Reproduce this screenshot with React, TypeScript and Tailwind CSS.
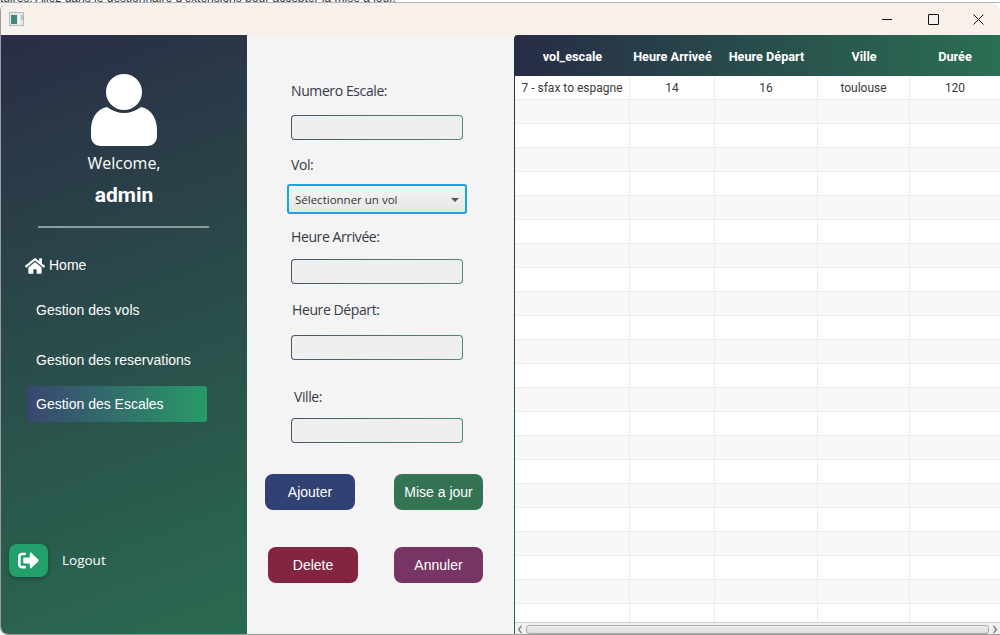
import React from "react";
import { FaHome, FaSignOutAlt } from "react-icons/fa";

const ui = "font-['Open_Sans',sans-serif]";
const arial = "font-['Liberation_Sans',Arial,sans-serif]";
const roboto = "font-['Roboto',sans-serif]";

const columns = [
  { name: "vol_escale", width: "w-[115px]", value: "7 - sfax to espagne" },
  { name: "Heure Arriveé", width: "w-[85px]", value: "14" },
  { name: "Heure Départ", width: "w-[103px]", value: "16" },
  { name: "Ville", width: "w-[92px]", value: "toulouse" },
  { name: "Durée", width: "w-[90px]", value: "120" },
];

const rows = Array.from({ length: 23 }, (_, i) => i);

function Avatar() {
  return (
    <svg width="66" height="72" viewBox="0 0 66 72" fill="white">
      <circle cx="33" cy="18" r="18" />
      <path d="M16 33 C22 37 27 39 33 39 C39 39 44 37 50 33 C60 35 66 44 66 56 L66 62 C66 68 62 72 56 72 L10 72 C4 72 0 68 0 62 L0 56 C0 44 6 35 16 33 Z" />
    </svg>
  );
}

function Field({ className }: { className: string }) {
  return (
    <div
      className={`h-[25px] w-[172px] rounded-[4px] bg-[linear-gradient(90deg,#46566a,#4f8a70)] p-px ${className}`}
    >
      <div className="h-full w-full rounded-[3px] bg-[#efefef]" />
    </div>
  );
}

function Label({ text, className }: { text: string; className: string }) {
  return (
    <div
      className={`${ui} h-5 text-[14px] leading-5 tracking-[-0.4px] text-[#333a45] ${className}`}
    >
      {text}
    </div>
  );
}

function ActionButton({
  text,
  className,
}: {
  text: string;
  className: string;
}) {
  return (
    <button
      className={`${arial} h-9 rounded-lg text-[14px] text-white ${className}`}
    >
      {text}
    </button>
  );
}

export default function App() {
  return (
    <div className="h-[635px] w-[1000px] overflow-hidden bg-white">
      {/* page behind the window */}
      <div className="h-[3px] overflow-hidden border-b border-[#b5b5b5] bg-white">
        <div
          className={`${arial} -mt-[10px] whitespace-nowrap text-[12px] leading-4 text-[#333]`}
        >
          tuires. Allez dans le gestionnaire d'extensions pour accepter la mise à jour.
        </div>
      </div>

      <div className="h-[632px] overflow-hidden rounded-t-lg rounded-bl-lg border-b border-l border-[#9c9c9c]">
        {/* title bar */}
        <div className="flex h-[32px] items-center justify-between bg-[#f8f0eb] pl-[8px]">
          <svg width="15" height="14" viewBox="0 0 15 14">
            <rect x="0.5" y="0.5" width="14" height="13" fill="#e4e8ea" stroke="#b8bcc0" />
            <rect x="2" y="3" width="6" height="9" fill="#3f8a74" />
            <rect x="9" y="3" width="2" height="9" fill="#f6f6f6" />
            <rect x="12" y="3" width="2" height="5" fill="#a9cfc2" />
          </svg>
          <div className="flex h-full items-center">
            <div className="flex h-full w-[46px] items-center justify-center">
              <div className="h-px w-[10px] bg-[#111]" />
            </div>
            <div className="flex h-full w-[46px] items-center justify-center">
              <div className="h-[11px] w-[11px] rounded-[1px] border border-[#111]" />
            </div>
            <div className="flex h-full w-[44px] items-center justify-center">
              <svg width="11" height="11" viewBox="0 0 11 11" stroke="#111" strokeWidth="1">
                <path d="M0.5 0.5 L10.5 10.5 M10.5 0.5 L0.5 10.5" />
              </svg>
            </div>
          </div>
        </div>

        <div className="flex h-[600px]">
          {/* sidebar */}
          <aside className="flex w-[246px] shrink-0 flex-col bg-[linear-gradient(160deg,#2a2d45_0%,#2a4a4a_45%,#2a6b50_100%)] text-white">
            <div className="mt-[39px] flex flex-col items-center">
              <Avatar />
              <div className={`${ui} mt-[5px] text-[16px] leading-6`}>Welcome,</div>
              <div className={`${roboto} mt-[8px] text-[21px] font-bold leading-6`}>
                admin
              </div>
              <div className="-ml-[2px] mt-[19px] h-[2px] w-[171px] bg-[#8c9c9c]" />
            </div>

            <div className={`${arial} mt-[27px] flex items-center pl-[24px] text-[14px]`}>
              <FaHome className="mr-[4px] text-[20px]" />
              Home
            </div>
            <div className={`${arial} mt-[24px] h-5 pl-[35px] text-[14px] leading-5`}>
              Gestion des vols
            </div>
            <div className={`${arial} mt-[30px] h-5 pl-[35px] text-[14px] leading-5`}>
              Gestion des reservations
            </div>
            <div
              className={`${arial} ml-[26px] mt-[16px] flex h-9 w-[180px] items-center rounded-[3px] bg-[linear-gradient(90deg,#3a4670,#289a68)] pl-[9px] text-[14px]`}
            >
              Gestion des Escales
            </div>

            <div className="ml-[8px] mt-[122px] flex items-center">
              <div className="flex h-[33px] w-[39px] items-center justify-center rounded-lg bg-[#21a06c] shadow-[0_1px_4px_rgba(0,0,0,0.35)]">
                <FaSignOutAlt className="text-[21px]" />
              </div>
              <span className={`${ui} ml-[14px] text-[13.5px]`}>Logout</span>
            </div>
          </aside>

          {/* form */}
          <section className="flex w-[267px] shrink-0 flex-col bg-[#f4f4f4] pl-[44px]">
            <Label text="Numero Escale:" className="mt-[46px]" />
            <Field className="mt-[14px]" />
            <Label text="Vol:" className="mt-[15px]" />
            <div
              className={`${ui} -ml-[4px] mt-[9px] flex h-[30px] w-[180px] items-center justify-between rounded-[3px] border-2 border-[#12a8dc] bg-[linear-gradient(180deg,#f4f4f4,#e6e6e6)] pl-[6px] pr-[6px] pt-[1px] text-[11.5px] text-[#333]`}
            >
              Sélectionner un vol
              <div className="h-0 w-0 border-x-[4px] border-t-[4px] border-x-transparent border-t-[#555]" />
            </div>
            <Label text="Heure Arrivée:" className="mt-[13px]" />
            <Field className="mt-[12px]" />
            <Label text="Heure Départ:" className="ml-[1px] mt-[16px]" />
            <Field className="mt-[15px]" />
            <Label text="Ville:" className="ml-[3px] mt-[27px]" />
            <Field className="mt-[11px]" />

            <div className="-ml-[26px] mt-[31px] flex gap-[39px]">
              <ActionButton text="Ajouter" className="w-[90px] bg-[#304273]" />
              <ActionButton text="Mise a jour" className="w-[89px] bg-[#357355]" />
            </div>
            <div className="-ml-[23px] mt-[37px] flex gap-[36px]">
              <ActionButton text="Delete" className="w-[90px] bg-[#84253f]" />
              <ActionButton text="Annuler" className="w-[89px] bg-[#763565]" />
            </div>
          </section>

          {/* table */}
          <section className="w-[486px] overflow-hidden rounded-tl-[4px] bg-[linear-gradient(180deg,#272c45,#2a6652)] pl-px">
            <div className="flex h-full flex-col bg-white">
              <div className="flex h-[41px] shrink-0 bg-[linear-gradient(90deg,#272c45,#2a6f53)]">
                {columns.map((col) => (
                  <div
                    key={col.name}
                    className={`${roboto} ${col.width} flex items-center justify-center pt-[2px] text-[12.7px] font-bold text-white`}
                  >
                    {col.name}
                  </div>
                ))}
              </div>
              <div className="min-h-0 flex-1 overflow-hidden">
                {rows.map((row) => (
                  <div
                    key={row}
                    className={`flex h-[24px] border-b border-[#ececec] ${row % 2 === 0 ? "bg-white" : "bg-[#f8f8f8]"}`}
                  >
                    {columns.map((col) => (
                      <div
                        key={col.name}
                        className={`${roboto} ${col.width} flex items-center justify-center border-r border-[#ececec] text-[12px] text-[#3a3a3a] last:border-r-0`}
                      >
                        {row === 0 ? col.value : ""}
                      </div>
                    ))}
                  </div>
                ))}
              </div>
              {/* horizontal scrollbar */}
              <div className="flex h-[13px] shrink-0 items-center border-t border-[#cfcfcf] bg-[#f0f0f0]">
                <svg width="11" height="9" viewBox="0 0 11 9" fill="none" stroke="#777" strokeWidth="1.2">
                  <path d="M6.5 1 L3.5 4.5 L6.5 8" />
                </svg>
                <div className="h-[9px] flex-1 rounded-[3px] border border-[#aaa] bg-[linear-gradient(180deg,#eee,#dcdcdc)]" />
                <svg width="11" height="9" viewBox="0 0 11 9" fill="none" stroke="#777" strokeWidth="1.2">
                  <path d="M4.5 1 L7.5 4.5 L4.5 8" />
                </svg>
              </div>
            </div>
          </section>
        </div>
      </div>
    </div>
  );
}
